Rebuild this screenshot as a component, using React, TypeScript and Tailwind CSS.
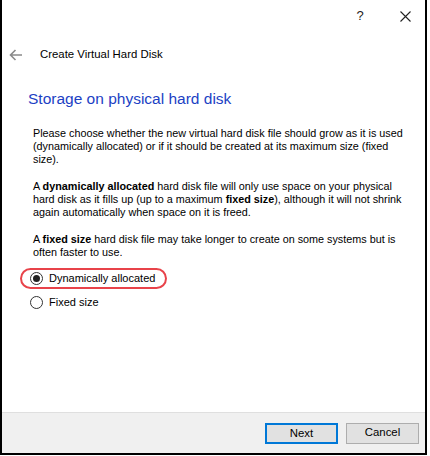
// 仮想ハードディスク作成ウィザード（ストレージ選択ページ）

import { useState } from "react";

type StorageKind = "dynamic" | "fixed";

const font = { fontFamily: '"Liberation Sans", Arial, sans-serif' };

const RadioDot: React.FC<{ checked: boolean }> = ({ checked }) => (
  <span className="w-[13px] h-[13px] rounded-full border border-[#333] bg-white flex items-center justify-center shrink-0">
    {checked && <span className="w-[7px] h-[7px] rounded-full bg-[#222]" />}
  </span>
);

const App: React.FC = () => {
  const [kind, setKind] = useState<StorageKind>("dynamic");

  return (
    <div className="w-[430px] h-[456px] bg-white text-black text-[10.8px]" style={font}>
      <div className="w-[427px] h-[455px] border-l-2 border-r-2 border-b-2 border-black flex flex-col">
        {/* タイトルバー */}
        <div className="h-[32px] flex justify-end gap-[5px] shrink-0">
          <div className="w-[40px] flex items-center justify-center text-[13px] text-[#222]">?</div>
          <div className="w-[40px] flex items-center justify-center">
            <svg width="11" height="11" viewBox="0 0 11 11" stroke="#222" strokeWidth="1.1" fill="none">
              <path d="M0.5 0.5 L10.5 10.5 M10.5 0.5 L0.5 10.5" />
            </svg>
          </div>
        </div>

        {/* ヘッダー */}
        <div className="h-[45px] flex items-center pl-[7px] shrink-0">
          <svg width="14" height="12" viewBox="0 0 14 12" stroke="#8a8a8a" strokeWidth="1.6" fill="none">
            <path d="M13 6 H1.5 M6.5 1 L1.5 6 L6.5 11" />
          </svg>
          <span className="ml-[17px] text-[11.4px]">Create Virtual Hard Disk</span>
        </div>

        {/* 本文 */}
        <div className="flex-1 pl-[26px]">
          <div className="mt-[11px] h-[22px] leading-[22px] text-[15.5px] text-[#1c3fc4]">
            Storage on physical hard disk
          </div>

          <div className="pl-[5px] leading-[13px]">
            <p className="mt-[17px]">
              Please choose whether the new virtual hard disk file should grow as it is used
              <br />
              (dynamically allocated) or if it should be created at its maximum size (fixed
              <br />
              size).
            </p>
            <p className="mt-[14px]">
              A <b>dynamically allocated</b> hard disk file will only use space on your physical
              <br />
              hard disk as it fills up (up to a maximum <b>fixed size</b>), although it will not shrink
              <br />
              again automatically when space on it is freed.
            </p>
            <p className="mt-[14px]">
              A <b>fixed size</b> hard disk file may take longer to create on some systems but is
              <br />
              often faster to use.
            </p>
          </div>

          <div className="mt-[9px] -ml-[8px] w-[147px] h-[21px] rounded-full border-2 border-[#e8434a] flex items-center pl-[8px] gap-[6px] whitespace-nowrap cursor-pointer"
            onClick={() => setKind("dynamic")}
          >
            <RadioDot checked={kind === "dynamic"} />
            <span className="text-[11px]">Dynamically allocated</span>
          </div>
          <div className="mt-[3px] h-[20px] flex items-center pl-[2px] gap-[6px] whitespace-nowrap cursor-pointer"
            onClick={() => setKind("fixed")}
          >
            <RadioDot checked={kind === "fixed"} />
            <span className="text-[11px]">Fixed size</span>
          </div>
        </div>

        {/* フッター */}
        <div className="h-[41px] shrink-0 bg-[#f0f0f0] border-t border-[#dfdfdf] flex items-center justify-end gap-[8px] pr-[6px]">
          <button className="w-[73px] h-[21px] bg-[#e1e1e1] border-2 border-[#0078d7] text-[11.4px]">Next</button>
          <button className="w-[73px] h-[21px] bg-[#e1e1e1] border border-[#adadad] text-[11.4px]">Cancel</button>
        </div>
      </div>
    </div>
  );
};

export default App;
